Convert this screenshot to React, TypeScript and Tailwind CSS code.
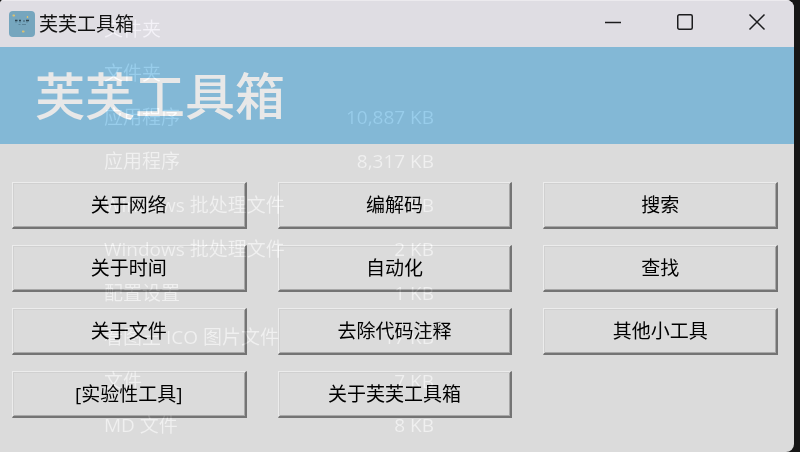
import type { ReactNode } from 'react';

const FONT = "font-['Open_Sans','Noto_Sans_CJK_SC',sans-serif]";

const tools = [
    '关于网络', '编解码', '搜索',
    '关于时间', '自动化', '查找',
    '关于文件', '去除代码注释', '其他小工具',
    '[实验性工具]', '关于芙芙工具箱',
];

// File list that shines through the translucent window
const files = [
    { type: '文件夹', size: '' },
    { type: '文件夹', size: '' },
    { type: '应用程序', size: '10,887 KB' },
    { type: '应用程序', size: '8,317 KB' },
    { type: 'Windows 批处理文件', size: '1 KB' },
    { type: 'Windows 批处理文件', size: '2 KB' },
    { type: '配置设置', size: '1 KB' },
    { type: '看图王 ICO 图片文件', size: '17 KB' },
    { type: '文件', size: '7 KB' },
    { type: 'MD 文件', size: '8 KB' },
];

const AppIcon = () => (
    <svg width="26" height="26" viewBox="0 0 26 26" aria-hidden="true">
        <rect width="26" height="26" rx="4" fill="#76a6be" />
        <path d="M3.5 4.5h2.5M4.7 3.5v2M18.5 5v2M13 20.5h2.5M14.2 19.5v2" stroke="#dcc272" strokeWidth="1.3" />
        <path d="M6 9.5h2.5M10 9.5h2M14.5 10h1M17 9.5h3" stroke="#2b4351" strokeWidth="1.5" />
        <path d="M7 10.5v1M11 10.5v1M18 10.5v1" stroke="#446778" />
        <path d="M9.5 13.5h2M13 13.5h4" stroke="#5a8398" />
    </svg>
);

const CaptionButton = ({ label, children }: { label: string; children: ReactNode }) => (
    <button type="button" aria-label={label} className="w-[72px] flex items-center justify-center">
        <svg width="18" height="18" viewBox="0 0 18 18" fill="none" stroke="#1c1c1e" strokeWidth="1.5">
            {children}
        </svg>
    </button>
);

const TitleBar = () => (
    <header className="h-[47px] flex justify-between bg-[#dfdde3] border-t border-[#eceaee]">
        <div className="flex items-center gap-1 pl-[9px]">
            <AppIcon />
            <span className="text-[19px] leading-6 text-[#111]">芙芙工具箱</span>
        </div>
        <div className="flex pr-px pb-1">
            <CaptionButton label="最小化">
                <path d="M1 9.5h16" />
            </CaptionButton>
            <CaptionButton label="最大化">
                <rect x="1.75" y="1.75" width="14.5" height="14.5" rx="1.5" />
            </CaptionButton>
            <CaptionButton label="关闭">
                <path d="M1.5 1.5l15 15M16.5 1.5l-15 15" />
            </CaptionButton>
        </div>
    </header>
);

const ToolButton = ({ label }: { label: string }) => (
    <button
        type="button"
        className="h-[47px] border-t border-l border-r-2 border-b-2 border-t-[#ececec] border-l-[#ececec] border-r-[#747474] border-b-[#747474] shadow-[inset_1px_1px_0_#d0d0d0,inset_-1px_-1px_0_#a8a8a8] text-[19px] leading-6 text-black"
    >
        {label}
    </button>
);

const GhostList = () => (
    <div aria-hidden="true" className="absolute inset-0 pt-[7px] pl-[104px] overflow-hidden pointer-events-none mix-blend-plus-lighter text-[#151515] text-[19px]">
        {files.map((file, i) => (
            <div key={i} className="h-11 w-[330px] flex items-center justify-between whitespace-nowrap">
                <span>{file.type}</span>
                <span>{file.size}</span>
            </div>
        ))}
    </div>
);

export default function App() {
    return (
        <div className={`${FONT} min-h-screen flex bg-[#161616] pr-[6px]`}>
            <div className="relative isolate flex-1 flex flex-col bg-[#dbdbdb] rounded-tl-sm rounded-r-lg overflow-hidden">
                <TitleBar />
                <div className="h-[97px] flex items-center px-[35px] bg-[#83b8d6]">
                    <h1 className="text-[50px] leading-[60px] font-medium text-[#e8e8e8]">芙芙工具箱</h1>
                </div>
                <main className="grid grid-cols-3 gap-x-[31px] gap-y-4 pt-[38px] pl-3 pr-4 pb-8">
                    {tools.map((label) => (
                        <ToolButton key={label} label={label} />
                    ))}
                </main>
                <GhostList />
            </div>
        </div>
    );
}
